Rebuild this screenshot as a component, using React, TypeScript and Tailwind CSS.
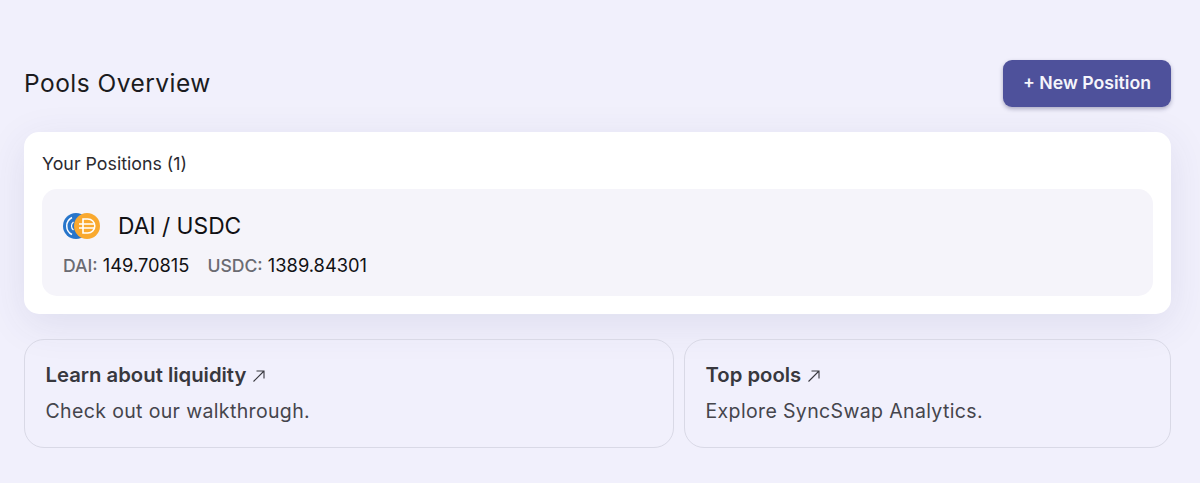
function CoinPair() {
  return (
    <svg width="37" height="26" viewBox="0 0 37 26" className="shrink-0">
      <circle cx="13" cy="13" r="13" fill="#2775ca" />
      <path d="M9 4.5a9.5 9.5 0 0 0 0 17" fill="none" stroke="#fff" strokeWidth="1.5" />
      <path d="M10.5 9a5 5 0 0 0 0 8" fill="none" stroke="#fff" strokeWidth="1.2" />
      <circle cx="24" cy="13" r="13" fill="#f9a92f" />
      <path d="M20 6h4.8a7 7 0 0 1 0 14H20z" fill="none" stroke="#fff" strokeWidth="1.6" />
      <path d="M16 11h16M16 15h16" stroke="#fff" strokeWidth="1.4" />
    </svg>
  )
}

function Arrow() {
  return (
    <svg width="14" height="14" viewBox="0 0 14 14" className="ml-[6px] inline-block align-[-1px]">
      <path d="M1.5 12.5 12 2M4.5 2H12v7.5" fill="none" stroke="#38383e" strokeWidth="1.1" />
    </svg>
  )
}

function InfoCard({ title, text, className }: { title: string; text: string; className: string }) {
  return (
    <div className={`h-[109px] rounded-[20px] border border-[#d9d9e6] pl-[20.5px] pt-[21px] ${className}`}>
      <div className="text-[20.3px] leading-[28px] font-semibold text-[#38383e]">{title}<Arrow /></div>
      <div className="mt-[8px] text-[19.5px] leading-[28px] tracking-[0.36px] text-[#45454c]">{text}</div>
    </div>
  )
}

export default function App() {
  return (
    <div className="h-[483px] overflow-hidden bg-[#f1f0fc] pl-[24px] pr-[29px] pt-[60px] font-['Inter',sans-serif]">
      <div className="flex h-[47px] items-center justify-between">
        <h1 className="text-[24.5px] tracking-[0.47px] text-[#1b1b20]">Pools Overview</h1>
        <button className="h-[47px] w-[168px] rounded-[9px] bg-[#4e519b] text-[17.7px] font-semibold text-[#f5f5fb] shadow-[0_2px_4px_rgba(40,40,90,0.35)]">
          + New Position
        </button>
      </div>

      <div className="mt-[25px] h-[182px] rounded-[15px] bg-white px-[18px] pt-[21px] shadow-[0_10px_40px_rgba(60,60,120,0.1)]">
        <div className="text-[17.8px] leading-[22px] text-[#2a2a30]">Your Positions (1)</div>
        <div className="mt-[14px] h-[107px] rounded-[15px] bg-[#f5f4fa] pl-[21px] pt-[24px]">
          <div className="flex h-[26px] items-center gap-[18px]">
            <CoinPair />
            <span className="text-[22.8px] text-[#111114]">DAI / USDC</span>
          </div>
          <div className="mt-[14px] flex gap-[18px] text-[18.3px] leading-[24px] text-[#111114]">
            <span><span className="text-[17.6px] font-medium text-[#6b6b72]">DAI:</span> 149.70815</span>
            <span><span className="text-[17.6px] font-medium text-[#6b6b72]">USDC:</span> 1389.84301</span>
          </div>
        </div>
      </div>

      <div className="mt-[25px] flex gap-[10px]">
        <InfoCard title="Learn about liquidity" text="Check out our walkthrough." className="w-[650px]" />
        <InfoCard title="Top pools" text="Explore SyncSwap Analytics." className="flex-1" />
      </div>
    </div>
  )
}
